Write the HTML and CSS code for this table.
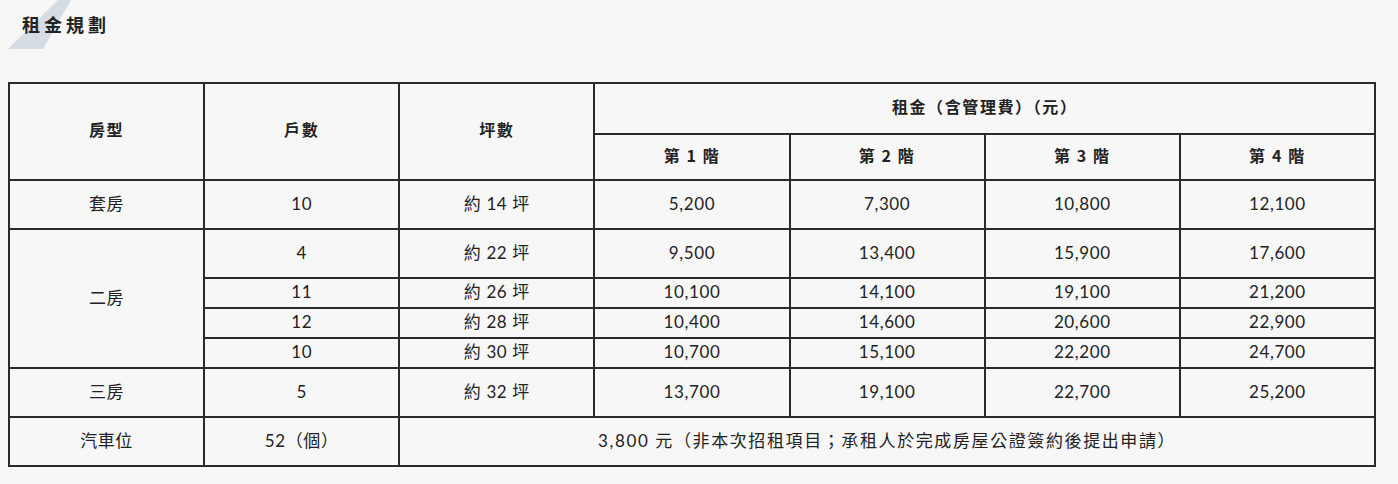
FILE: index.html
```html
<!DOCTYPE html>
<html lang="zh-Hant">
<head>
<meta charset="utf-8">
<title>租金規劃</title>
<link rel="stylesheet" href="styles.css">
</head>
<body>
<section class="rent">
  <header class="rent-head">
    <span class="rent-deco"></span>
    <h2 class="rent-title">租金規劃</h2>
  </header>
  <table class="rent-table">
    <colgroup>
      <col><col><col><col><col><col><col>
    </colgroup>
    <thead>
      <tr class="h1">
        <th rowspan="2">房型</th>
        <th rowspan="2">戶數</th>
        <th rowspan="2">坪數</th>
        <th colspan="4">租金（含管理費）（元）</th>
      </tr>
      <tr class="h2">
        <th>第 1 階</th>
        <th>第 2 階</th>
        <th>第 3 階</th>
        <th>第 4 階</th>
      </tr>
    </thead>
    <tbody>
      <tr class="tall">
        <td>套房</td><td>10</td><td>約 14 坪</td><td>5,200</td><td>7,300</td><td>10,800</td><td>12,100</td>
      </tr>
      <tr class="tall">
        <td rowspan="4">二房</td><td>4</td><td>約 22 坪</td><td>9,500</td><td>13,400</td><td>15,900</td><td>17,600</td>
      </tr>
      <tr class="short">
        <td>11</td><td>約 26 坪</td><td>10,100</td><td>14,100</td><td>19,100</td><td>21,200</td>
      </tr>
      <tr class="short">
        <td>12</td><td>約 28 坪</td><td>10,400</td><td>14,600</td><td>20,600</td><td>22,900</td>
      </tr>
      <tr class="short">
        <td>10</td><td>約 30 坪</td><td>10,700</td><td>15,100</td><td>22,200</td><td>24,700</td>
      </tr>
      <tr class="tall">
        <td>三房</td><td>5</td><td>約 32 坪</td><td>13,700</td><td>19,100</td><td>22,700</td><td>25,200</td>
      </tr>
      <tr class="tall">
        <td>汽車位</td><td>52（個）</td><td colspan="5" class="note">3,800 元（非本次招租項目；承租人於完成房屋公證簽約後提出申請）</td>
      </tr>
    </tbody>
  </table>
</section>
</body>
</html>
```

FILE: styles.css
```css
html, body {
  background: #f7f7f7;
}
body {
  margin: 0;
  padding: 0 22px 0 8px;
  color: #222;
  font-family: "Lato", "Noto Sans CJK TC", sans-serif;
}
.rent-head {
  position: relative;
  height: 82px;
}
.rent-deco {
  position: absolute;
  left: 0;
  top: 0;
  width: 63px;
  height: 49px;
  background: #d6dce4;
  clip-path: polygon(50px 0, 63px 0, 35px 49px, 0 49px);
}
.rent-title {
  position: relative;
  margin: 0;
  padding: 12px 0 0 14px;
  font-size: 18px;
  line-height: 24px;
  font-weight: 700;
  letter-spacing: 4px;
  font-family: "Noto Sans CJK TC", sans-serif;
}
.rent-table {
  width: 1368px;
  border-collapse: collapse;
  table-layout: fixed;
  font-size: 17px;
}
.rent-table th,
.rent-table td {
  border: 2px solid #2a2a2a;
  padding: 0 0 5px;
  text-align: center;
  vertical-align: middle;
  letter-spacing: 0.6px;
  line-height: 22px;
}
.rent-table th {
  font-family: "Noto Sans CJK TC", sans-serif;
  font-size: 16px;
  font-weight: 700;
  letter-spacing: 1.6px;
}
.rent-table td {
  font-weight: 400;
  padding-bottom: 2px;
}
.rent-table .note {
  letter-spacing: 1.6px;
}
.h1 { height: 51px; }
.h2 { height: 46px; }
.tall { height: 49px; }
.short { height: 30px; }
```
